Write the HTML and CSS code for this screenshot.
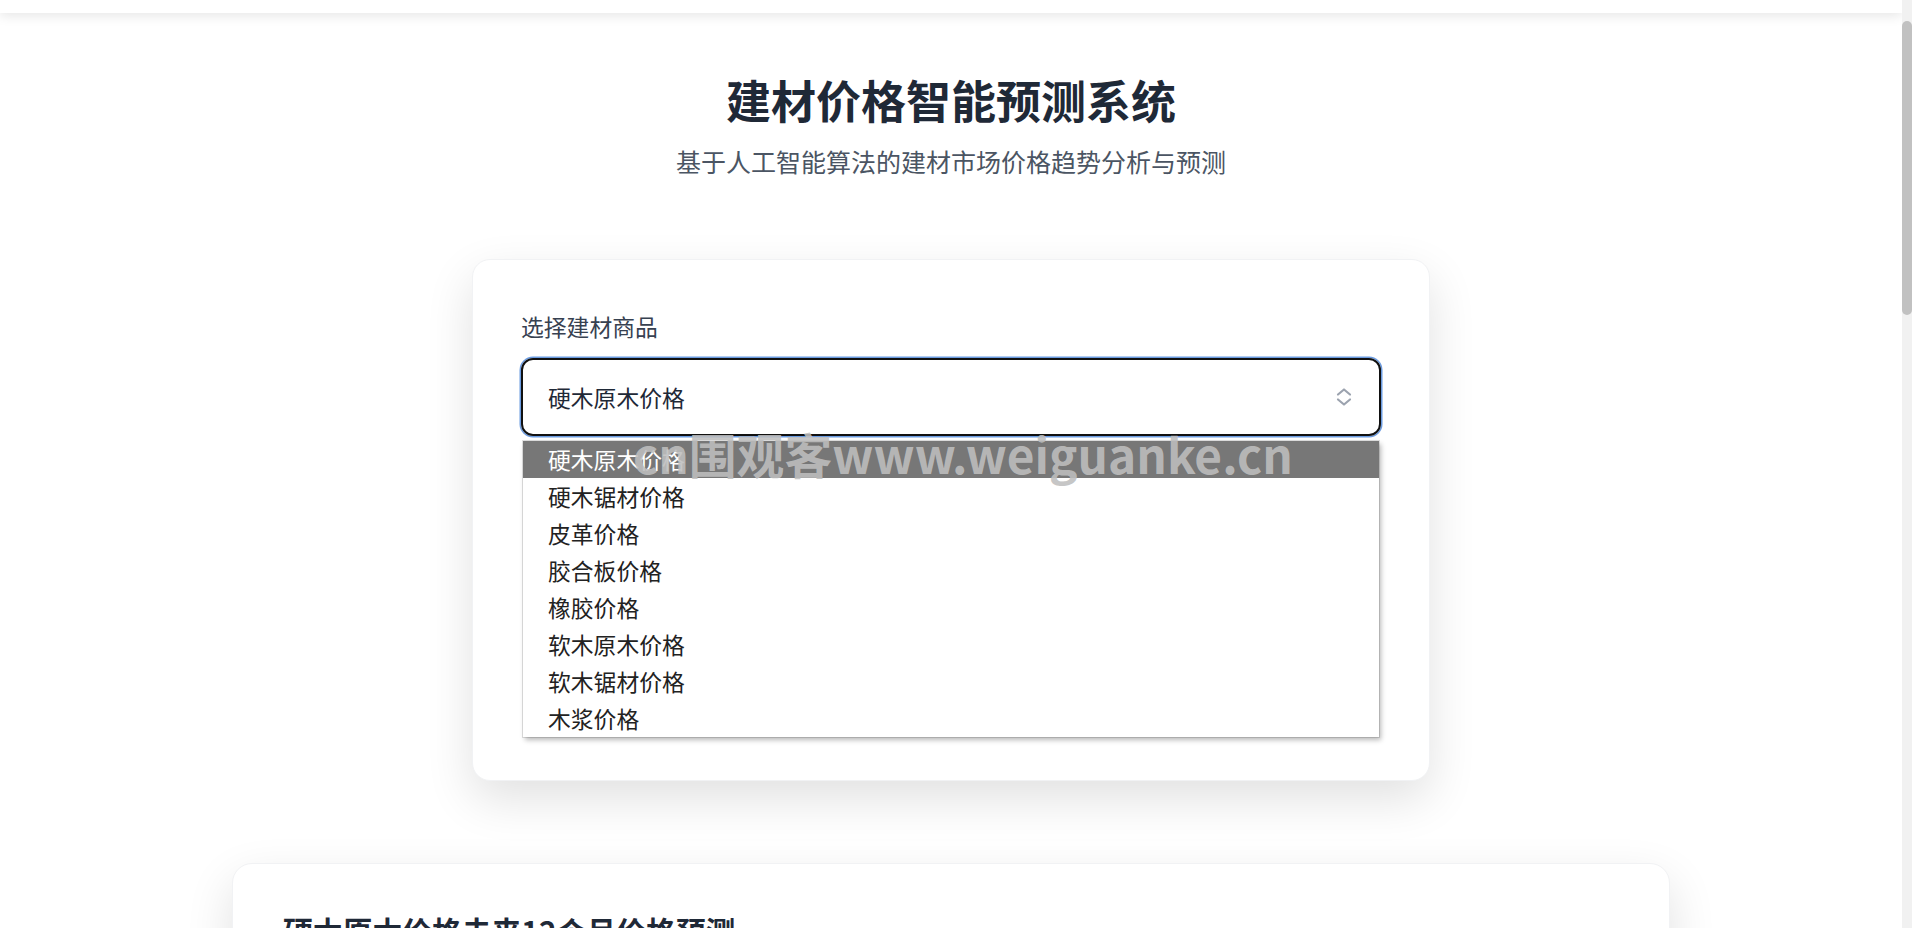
FILE: index.html
```html
<!DOCTYPE html>
<html lang="zh-CN">
<head>
    <meta charset="UTF-8">
    <meta name="viewport" content="width=device-width, initial-scale=1.0">
    <title>建材价格智能预测系统</title>
    <link rel="stylesheet" href="styles.css">
</head>
<body>
    <div class="page">
        <div class="topbar"></div>

        <main class="container">
            <header class="hero">
                <h1>建材价格智能预测系统</h1>
                <p>基于人工智能算法的建材市场价格趋势分析与预测</p>
            </header>

            <section class="card select-card">
                <label class="field-label">选择建材商品</label>
                <div class="select-wrap">
                    <div class="select-box">
                        <span>硬木原木价格</span>
                        <svg class="chevron" width="20" height="22" viewBox="0 0 20 22" fill="none" stroke="#9ca3af" stroke-width="2.2" stroke-linecap="round" stroke-linejoin="round">
                            <path d="M4 8.5 L10 3.5 L16 8.5"/>
                            <path d="M4 13.5 L10 18.5 L16 13.5"/>
                        </svg>
                    </div>
                    <!-- opened dropdown -->
                    <ul class="option-list">
                        <li class="selected">硬木原木价格</li>
                        <li>硬木锯材价格</li>
                        <li>皮革价格</li>
                        <li>胶合板价格</li>
                        <li>橡胶价格</li>
                        <li>软木原木价格</li>
                        <li>软木锯材价格</li>
                        <li>木浆价格</li>
                    </ul>
                </div>
                <div class="form-rest"></div>
            </section>

            <section class="card result-card">
                <h2>硬木原木价格未来12个月价格预测</h2>
                <div class="chart-area"></div>
            </section>
        </main>
    </div>

    <!-- page scrollbar (screenshot hides the native one) -->
    <div class="scrollbar"><div class="scrollbar-thumb"></div></div>

    <div class="watermark">cn围观客www.weiguanke.cn</div>
</body>
</html>
```

FILE: styles.css
```css
::-webkit-scrollbar {
    width: 0;
}

body {
    margin: 0;
    background: #fff;
    font-family: "Noto Sans CJK SC", "Noto Sans", sans-serif;
    color: #1f2937;
}

.page {
    width: calc(100% - 10px);
}

.scrollbar {
    position: fixed;
    top: 0;
    right: 0;
    width: 10px;
    height: 100vh;
    background: #f1f1f1;
    z-index: 10;
}
.scrollbar-thumb {
    margin-top: 21px;
    height: 294px;
    background: #c1c1c1;
    border-radius: 5px;
}

.topbar {
    height: 13px;
    background: #fff;
    box-shadow: 0 3px 12px rgba(0, 0, 0, 0.1);
    position: relative;
    z-index: 2;
}

.container {
    display: flex;
    flex-direction: column;
    align-items: center;
    padding-bottom: 60px;
}

.hero {
    text-align: center;
    margin-top: 58px;
}
.hero h1 {
    margin: 0;
    font-size: 45px;
    line-height: 58px;
    font-weight: 700;
    color: #1f2937;
}
.hero p {
    margin: 14px 0 0;
    font-size: 25px;
    line-height: 36px;
    color: #4b5563;
}

.card {
    box-sizing: border-box;
    background: #fff;
    border: 1px solid #f1f2f4;
    border-radius: 18px;
    box-shadow: 0 18px 48px rgba(0, 0, 0, 0.12);
}

.select-card {
    width: 958px;
    margin-top: 80px;
    padding: 49px 48px;
}

.field-label {
    display: block;
    font-size: 22.8px;
    line-height: 36px;
    color: #374151;
    margin-bottom: 13px;
}

.select-wrap {
    position: relative;
}
.select-box {
    box-sizing: border-box;
    height: 78px;
    display: flex;
    align-items: center;
    justify-content: space-between;
    padding: 0 25px;
    border: 2px solid #111;
    border-radius: 12px;
    box-shadow: 0 0 0 1.5px #6b9be0;
    font-size: 22.8px;
    color: #1f2937;
}

.option-list {
    position: absolute;
    top: calc(100% + 5px);
    left: 2px;
    right: 2px;
    margin: 0;
    padding: 0;
    list-style: none;
    background: #fff;
    box-shadow: 0 0 0 1px rgba(0, 0, 0, 0.12), 2px 3px 5px rgba(0, 0, 0, 0.28);
    z-index: 3;
}
.option-list li {
    height: 37px;
    line-height: 37px;
    padding-left: 25px;
    font-size: 22.8px;
    color: #222;
}
.option-list li.selected {
    background: #777;
    color: #fff;
}

.form-rest {
    height: 295px;
}

.result-card {
    width: 1438px;
    margin-top: 82px;
    padding: 46px 50px;
    border-radius: 20px;
}
.result-card h2 {
    margin: 0;
    font-size: 29.8px;
    line-height: 40px;
    font-weight: 700;
    color: #1f2937;
}
.chart-area {
    height: 1880px;
}

.watermark {
    position: absolute;
    left: 633px;
    top: 423px;
    font-family: "Noto Sans CJK SC", sans-serif;
    font-size: 47.8px;
    line-height: 62px;
    font-weight: 700;
    color: rgba(190, 190, 190, 0.9);
    white-space: nowrap;
    z-index: 5;
}
```
